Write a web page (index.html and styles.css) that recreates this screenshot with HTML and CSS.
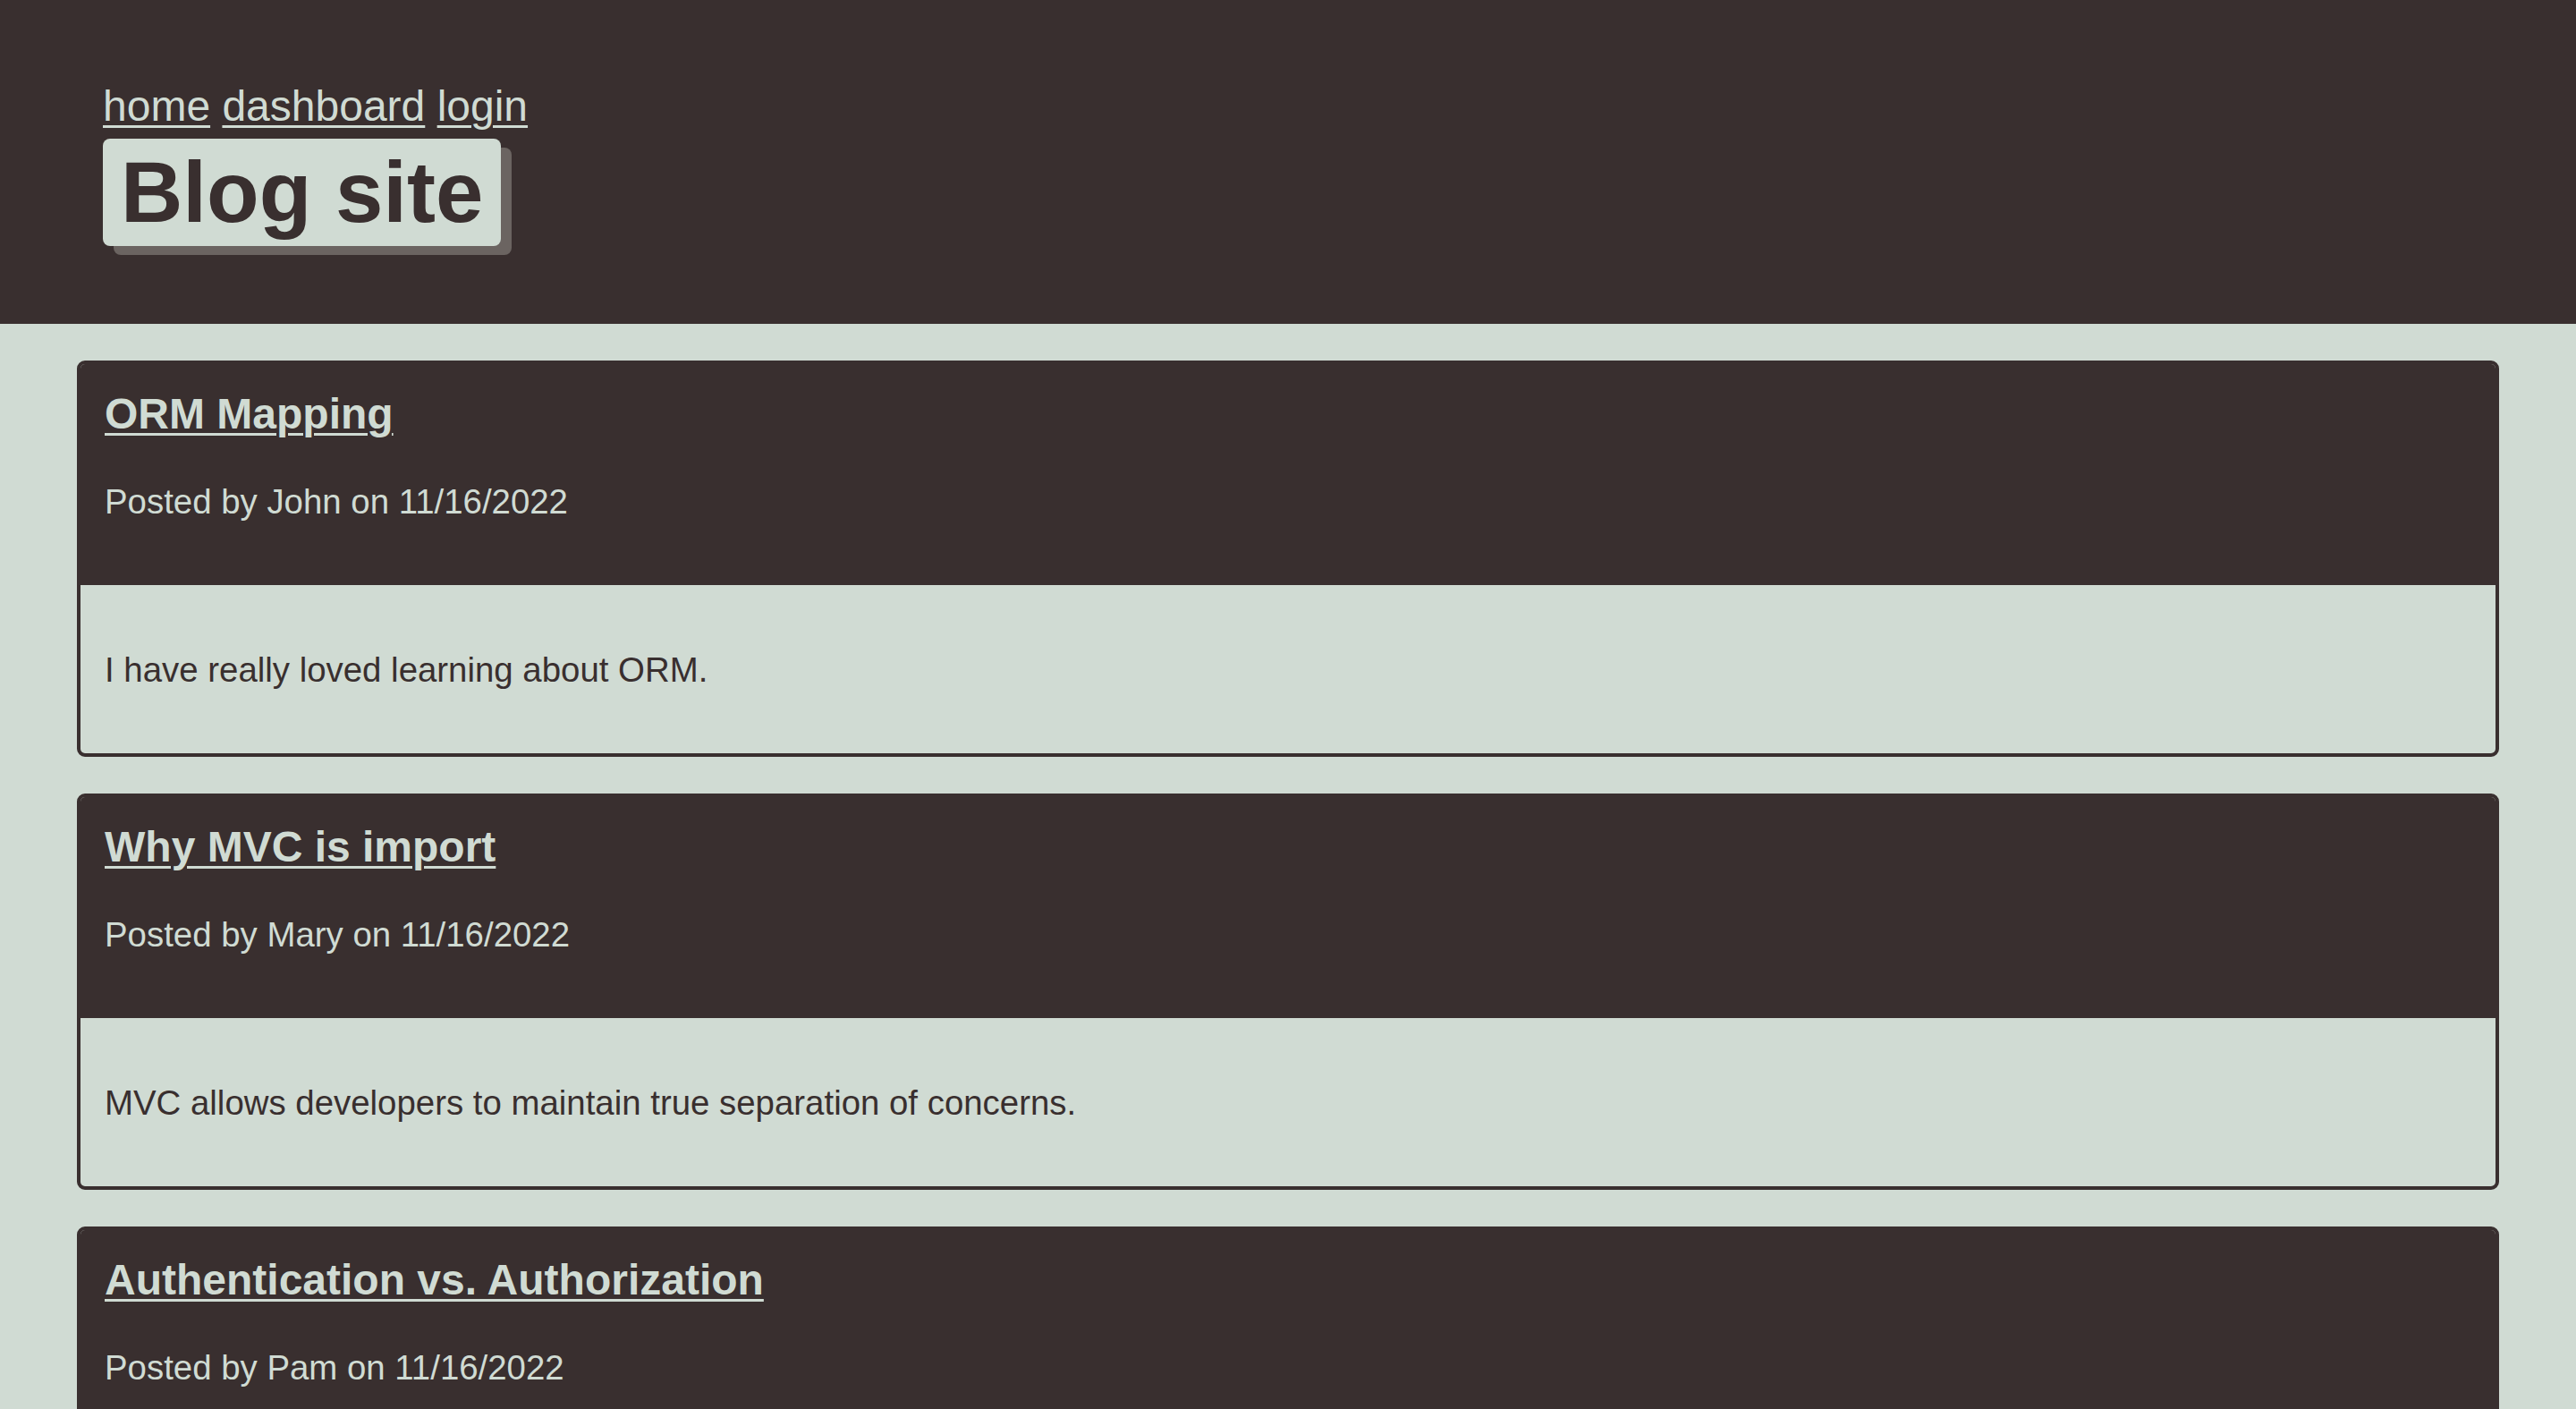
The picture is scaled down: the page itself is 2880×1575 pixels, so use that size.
FILE: index.html
```html
<!DOCTYPE html>
<html lang="en">
<head>
<meta charset="utf-8">
<title>Blog site</title>
<link rel="stylesheet" href="styles.css">
</head>
<body>
<header class="site-header">
  <nav class="nav">
    <a href="#">home</a>
    <a href="#">dashboard</a>
    <a href="#">login</a>
  </nav>
  <h1 class="site-title">Blog site</h1>
</header>
<main class="posts">
  <article class="post">
    <div class="post-head">
      <h2 class="post-title"><a href="#">ORM Mapping</a></h2>
      <p class="post-meta">Posted by John on 11/16/2022</p>
    </div>
    <div class="post-body">
      <p>I have really loved learning about ORM.</p>
    </div>
  </article>
  <article class="post">
    <div class="post-head">
      <h2 class="post-title"><a href="#">Why MVC is import</a></h2>
      <p class="post-meta">Posted by Mary on 11/16/2022</p>
    </div>
    <div class="post-body">
      <p>MVC allows developers to maintain true separation of concerns.</p>
    </div>
  </article>
  <article class="post">
    <div class="post-head">
      <h2 class="post-title"><a href="#">Authentication vs. Authorization</a></h2>
      <p class="post-meta">Posted by Pam on 11/16/2022</p>
    </div>
    <div class="post-body"></div>
  </article>
</main>
</body>
</html>
```
FILE: styles.css
```css
html, body {
  margin: 0;
  padding: 0;
}
body {
  background: #d0dbd3;
  color: #392f2f;
  font-family: "Liberation Sans", Arial, Helvetica, sans-serif;
}
.site-header {
  background: #392f2f;
  padding: 91px 115px 87px;
  display: flex;
  flex-direction: column;
  align-items: flex-start;
}
.nav {
  font-size: 48px;
  line-height: 55px;
}
.nav a {
  color: #d0dbd3;
  text-decoration: underline;
  text-decoration-thickness: 3px;
  text-underline-offset: 5px;
}
.site-title {
  margin: 9px 0 0;
  background: #d0dbd3;
  color: #392f2f;
  font-size: 96px;
  font-weight: 700;
  line-height: 110px;
  padding: 5px 20px;
  border-radius: 8px;
  box-shadow: 12px 10px 0 #6b6461;
}
.posts {
  padding: 41px 86px 0;
  display: flex;
  flex-direction: column;
  gap: 41px;
}
.post {
  border: 4px solid #392f2f;
  border-radius: 9px;
  overflow: hidden;
  height: 443px;
  box-sizing: border-box;
}
.post-head {
  background: #392f2f;
  height: 251px;
  box-sizing: border-box;
  margin: -4px -4px 0;
  padding: 32px 31px 0;
}
.post-title {
  margin: 0;
  font-size: 48px;
  line-height: 56px;
  font-weight: 700;
}
.post-title a {
  color: #d0dbd3;
  text-decoration: underline;
  text-decoration-thickness: 3px;
  text-underline-offset: 5px;
}
.post-meta {
  margin: 48px 0 0;
  color: #d0dbd3;
  font-size: 38.4px;
  line-height: 44px;
}
.post-body {
  padding: 73px 27px 0;
}
.post-body p {
  margin: 0;
  font-size: 38.4px;
  line-height: 44px;
  color: #392f2f;
}
```
